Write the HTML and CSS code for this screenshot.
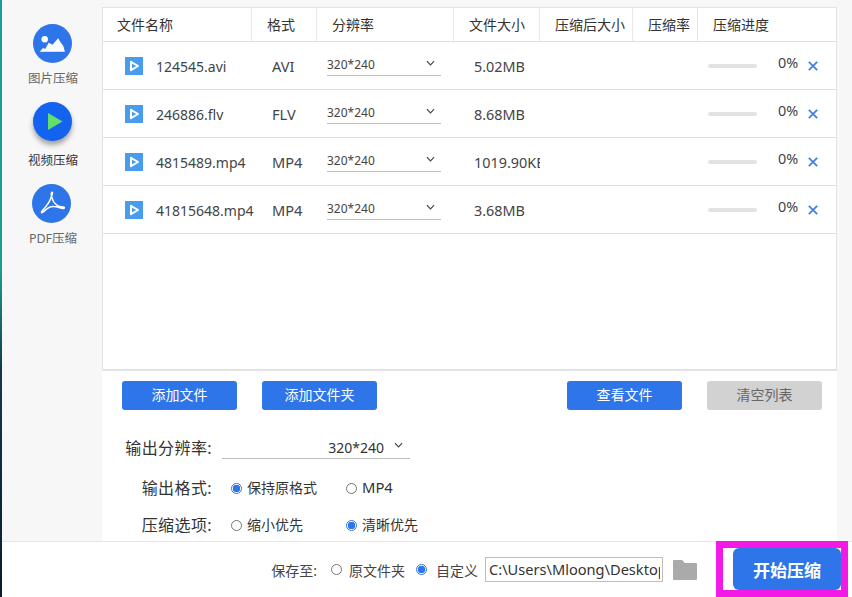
FILE: index.html
```html
<!DOCTYPE html>
<html lang="zh">
<head>
<meta charset="utf-8">
<title>视频压缩</title>
<link rel="stylesheet" href="styles.css">
</head>
<body>
<svg class="defs" aria-hidden="true">
  <symbol id="chev" viewBox="0 0 10 6"><path d="M1 1l4 4 4-4" fill="none" stroke="#444" stroke-width="1.3"/></symbol>
  <symbol id="file" viewBox="0 0 18 18"><rect width="18" height="18" fill="#479cee"/><path d="M6 4.800l7 4.200-7 4.200z" fill="none" stroke="#fff" stroke-width="2" stroke-linejoin="round"/></symbol>
  <symbol id="close" viewBox="0 0 10 10"><path d="M.8.8l8.400 8.400M9.200.8L.8 9.200" fill="none" stroke="#3f7fd6" stroke-width="1.700"/></symbol>
</svg>
<div class="app">
  <div class="strip"></div>
  <div class="content">
    <div class="upper">
      <nav class="side">
        <div class="nav-item">
          <div class="nav-icon">
            <svg width="39" height="39" viewBox="0 0 39 39"><circle cx="11.700" cy="15.300" r="3.200" fill="#fff"/><path d="M6.700 27.700l3.300-3.800 2.200 1 3.500-6.200 3.800 2 5.700-6.400 2.700 4.500 2.500 3.500 1.500 5.400z" fill="#fff"/></svg>
          </div>
          <span class="nav-label">图片压缩</span>
        </div>
        <div class="nav-item active">
          <div class="nav-icon">
            <svg width="39" height="39" viewBox="0 0 39 39"><path d="M15 11l14.500 8.500L15 28z" fill="#62e06b"/></svg>
          </div>
          <span class="nav-label">视频压缩</span>
        </div>
        <div class="nav-item third">
          <div class="nav-icon">
            <svg width="39" height="39" viewBox="0 0 39 39"><path d="M20 8.500c-1.500.5-.5 5 1.500 9 2 3.500 6 5.500 10 5.500 1.500 0 1 1.800-.5 1.500-4-.8-9-3-13-1.500-3 1-5.500 4-7.500 5.500-1 .8-1.500-.5-.5-1.500 4-4 8-10 9.500-14.500.8-2.500 1.500-5 .5-4z" fill="none" stroke="#fff" stroke-width="1.500" stroke-linejoin="round"/></svg>
          </div>
          <span class="nav-label">PDF压缩</span>
        </div>
      </nav>
      <main class="main">
        <section class="table">
          <div class="thead">
            <div class="th">文件名称</div>
            <div class="th">格式</div>
            <div class="th">分辨率</div>
            <div class="th">文件大小</div>
            <div class="th">压缩后大小</div>
            <div class="th">压缩率</div>
            <div class="th last">压缩进度</div>
          </div>
          <div class="row">
            <div class="cell name"><svg class="file-icon"><use href="#file"/></svg><span class="txt">124545.avi</span></div>
            <div class="cell fmt"><span class="txt">AVI</span></div>
            <div class="cell res"><div class="mini-select">320*240<svg class="chev"><use href="#chev"/></svg></div></div>
            <div class="cell size"><span class="txt">5.02MB</span></div>
            <div class="cell"></div>
            <div class="cell"></div>
            <div class="cell prog"><span class="bar"></span><span class="pct">0%</span><svg class="close"><use href="#close"/></svg></div>
          </div>
          <div class="row">
            <div class="cell name"><svg class="file-icon"><use href="#file"/></svg><span class="txt">246886.flv</span></div>
            <div class="cell fmt"><span class="txt">FLV</span></div>
            <div class="cell res"><div class="mini-select">320*240<svg class="chev"><use href="#chev"/></svg></div></div>
            <div class="cell size"><span class="txt">8.68MB</span></div>
            <div class="cell"></div>
            <div class="cell"></div>
            <div class="cell prog"><span class="bar"></span><span class="pct">0%</span><svg class="close"><use href="#close"/></svg></div>
          </div>
          <div class="row">
            <div class="cell name"><svg class="file-icon"><use href="#file"/></svg><span class="txt">4815489.mp4</span></div>
            <div class="cell fmt"><span class="txt">MP4</span></div>
            <div class="cell res"><div class="mini-select">320*240<svg class="chev"><use href="#chev"/></svg></div></div>
            <div class="cell size"><span class="txt">1019.90KB</span></div>
            <div class="cell"></div>
            <div class="cell"></div>
            <div class="cell prog"><span class="bar"></span><span class="pct">0%</span><svg class="close"><use href="#close"/></svg></div>
          </div>
          <div class="row">
            <div class="cell name"><svg class="file-icon"><use href="#file"/></svg><span class="txt">41815648.mp4</span></div>
            <div class="cell fmt"><span class="txt">MP4</span></div>
            <div class="cell res"><div class="mini-select">320*240<svg class="chev"><use href="#chev"/></svg></div></div>
            <div class="cell size"><span class="txt">3.68MB</span></div>
            <div class="cell"></div>
            <div class="cell"></div>
            <div class="cell prog"><span class="bar"></span><span class="pct">0%</span><svg class="close"><use href="#close"/></svg></div>
          </div>
        </section>
        <div class="actions">
          <button class="btn">添加文件</button>
          <button class="btn">添加文件夹</button>
          <span class="spacer"></span>
          <button class="btn">查看文件</button>
          <button class="btn muted">清空列表</button>
        </div>
        <div class="options">
          <div class="opt-row first">
            <span class="opt-label">输出分辨率:</span>
            <div class="big-select"><span>320*240</span><svg class="chev"><use href="#chev"/></svg></div>
          </div>
          <div class="opt-row second">
            <span class="opt-label">输出格式:</span>
            <span class="choice col1"><i class="radio on"></i>保持原格式</span>
            <span class="choice latin"><i class="radio"></i>MP4</span>
          </div>
          <div class="opt-row third-row">
            <span class="opt-label">压缩选项:</span>
            <span class="choice col1"><i class="radio"></i>缩小优先</span>
            <span class="choice"><i class="radio on"></i>清晰优先</span>
          </div>
        </div>
      </main>
    </div>
    <footer class="bar-bottom">
      <span class="save-label">保存至:</span>
      <span class="save-choice"><i class="radio"></i>原文件夹</span>
      <span class="save-choice"><i class="radio on"></i>自定义</span>
      <div class="path"><div class="path-text">C:\Users\Mloong\Desktop</div></div>
      <svg class="folder" viewBox="0 0 24 20"><path d="M1 0h8l3 3h11a1 1 0 0 1 1 1v15a1 1 0 0 1-1 1H1a1 1 0 0 1-1-1V1a1 1 0 0 1 1-1z" fill="#aaa"/></svg>
      <div class="frame"><button class="start">开始压缩</button></div>
    </footer>
  </div>
</div>
</body>
</html>
```

FILE: styles.css
```css
* { box-sizing: border-box; }
html, body { margin: 0; height: 100%; overflow: hidden; }
body {
  background: #fff;
  color: #333;
  font-family: "Noto Sans", "Noto Sans CJK SC", sans-serif;
  font-size: 14px;
}
.defs { display: none; }
.app { display: flex; width: 852px; height: 597px; }
.strip {
  flex: 0 0 2px;
  background: linear-gradient(#1d9a9f 0%, #1aa08f 45%, #0f3a4a 62%, #0b1c2e 100%);
}
.content { flex: 1; display: flex; flex-direction: column; min-width: 0; }
.upper { flex: 0 0 541px; display: flex; background: #f7f7f7; padding-right: 15px; overflow: hidden; }

/* sidebar */
.side { flex: 0 0 100px; display: flex; flex-direction: column; align-items: center; padding-top: 24px; }
.nav-item { display: flex; flex-direction: column; align-items: center; height: 78px; }
.nav-icon { width: 39px; height: 39px; border-radius: 50%; background: #2d75e8; margin-left: 1px; }
.nav-icon svg { display: block; }
.nav-label { font-size: 12.500px; line-height: 16px; margin-top: 8px; color: #666; margin-left: 2px; }
.active { height: 82px; }
.active .nav-icon { background: #1463f0; box-shadow: 0 4px 5px rgba(60, 60, 60, .45); }
.active .nav-label { color: #333; margin-top: 12px; }
.third .nav-icon { margin-left: -1px; }
.third .nav-label { margin-top: 8px; }

/* main */
.main { flex: 1; background: #fff; margin-top: 7px; display: flex; flex-direction: column; min-width: 0; }
.table {
  height: 364px;
  flex: none;
  border: 1px solid #e3e3e3;
  border-bottom: 2px solid #e3e3e3;
}
.thead, .row {
  display: grid;
  grid-template-columns: 149px 65px 137px 86px 93px 65px 138px;
}
.thead { height: 34px; border-bottom: 1px solid #e0e0e0; }
.th {
  display: flex;
  align-items: center;
  padding: 0 0 2px 15px;
  font-size: 14px;
  color: #333;
  border-right: 1px solid #e8e8e8;
  white-space: nowrap;
  overflow: hidden;
}
.th:first-child { padding-left: 14px; }
.th.last { border-right: 0; }
.row { height: 48px; border-bottom: 1px solid #e0e0e0; }
.cell { display: flex; align-items: center; min-width: 0; overflow: hidden; white-space: nowrap; color: #444; font-size: 14.400px; }
.txt { padding-top: 1px; }
.name { padding-left: 22px; overflow: visible; font-size: 14px; }
.name .txt { padding-top: 2px; }
.file-icon { width: 18px; height: 18px; margin-right: 13px; flex: none; }
.fmt { padding-left: 20px; font-size: 14.600px; }
.res { padding-left: 10px; }
.size { padding-left: 20px; }
.mini-select {
  width: 114px;
  height: 21px;
  display: flex;
  justify-content: space-between;
  align-items: flex-start;
  font-size: 12px;
  line-height: 20px;
  border-bottom: 1px solid #bdbdbd;
  padding-right: 6px;
}
.chev { width: 9px; height: 6px; margin-top: 5px; }
.prog { padding-left: 10px; }
.bar { width: 49px; height: 4px; background: #e3e3e3; border-radius: 2px; margin-top: 1px; }
.pct { margin-left: 21px; margin-bottom: 6px; width: 20px; }
.close { width: 10px; height: 10px; margin-left: 10px; margin-top: 1px; }

/* actions */
.actions { display: flex; gap: 25px; padding: 10px 15px 0 20px; }
.spacer { flex: 1; }
.btn {
  width: 115px;
  height: 29px;
  border: 0;
  border-radius: 3px;
  background: #2d75e8;
  color: #fff;
  font: inherit;
  font-size: 14px;
  padding: 0 0 3px;
}
.muted { background: #d2d2d2; color: #666; }

/* options */
.options { display: flex; flex-direction: column; color: #333; }
.opt-row { display: flex; align-items: center; height: 24px; }
.first { margin-top: 25px; }
.second { margin-top: 16px; }
.third-row { margin-top: 13px; }
.opt-label { width: 110px; text-align: right; font-size: 16px; letter-spacing: .4px; white-space: nowrap; color: #333; }
.big-select {
  margin-left: 10px;
  width: 188px;
  height: 21px;
  display: flex;
  align-items: flex-start;
  justify-content: flex-end;
  border-bottom: 1px solid #bdbdbd;
  padding-right: 7px;
  font-size: 14px;
  line-height: 20px;
  margin-top: 2px;
}
.big-select .chev { margin-left: 10px; margin-top: 4px; }
.choice { display: flex; align-items: center; font-size: 14px; margin-left: 19px; }
.latin { font-size: 14.800px; }
.col1 { width: 96px; }
.choice .radio { margin: 2px 5px 0 0; }
.radio {
  display: block;
  flex: none;
  width: 11px;
  height: 11px;
  border: 1px solid #767676;
  border-radius: 50%;
  background: #fff;
}
.radio.on { border-color: #2d75e8; background: radial-gradient(circle, #2d75e8 0 3.500px, #fff 4px); }

/* footer */
.bar-bottom {
  flex: 0 0 56px;
  display: flex;
  align-items: center;
  justify-content: flex-end;
  padding-right: 4px;
  background: #fff;
  border-top: 1px solid #e6e6e6;
  color: #444;
}
.save-label { margin-right: 14px; }
.save-choice { display: flex; align-items: center; margin-right: 11px; }
.save-choice .radio { margin-right: 7px; }
.save-choice + .save-choice { margin-right: 7px; }
.save-choice + .save-choice .radio { margin-right: 9px; }
.path {
  width: 178px;
  height: 25px;
  border: 1px solid #bdbdbd;
  padding: 0 2px 0 3px;
  color: #333;
  margin-right: 10px;
}
.path-text {
  line-height: 23px;
  font-size: 14.600px;
  overflow: hidden;
  white-space: nowrap;
}
.folder { width: 24px; height: 20px; margin-right: 19px; }
.frame {
  width: 132px;
  height: 56px;
  margin-top: -1px;
  border: 7px solid #f31ae8;
  padding-left: 10px;
  background: #fff;
}
.start {
  display: block;
  width: 100%;
  height: 100%;
  border: 0;
  border-radius: 6px;
  background: #2d75e8;
  color: #fff;
  font: inherit;
  font-size: 17px;
  font-weight: 700;
  padding: 0;
}
```
